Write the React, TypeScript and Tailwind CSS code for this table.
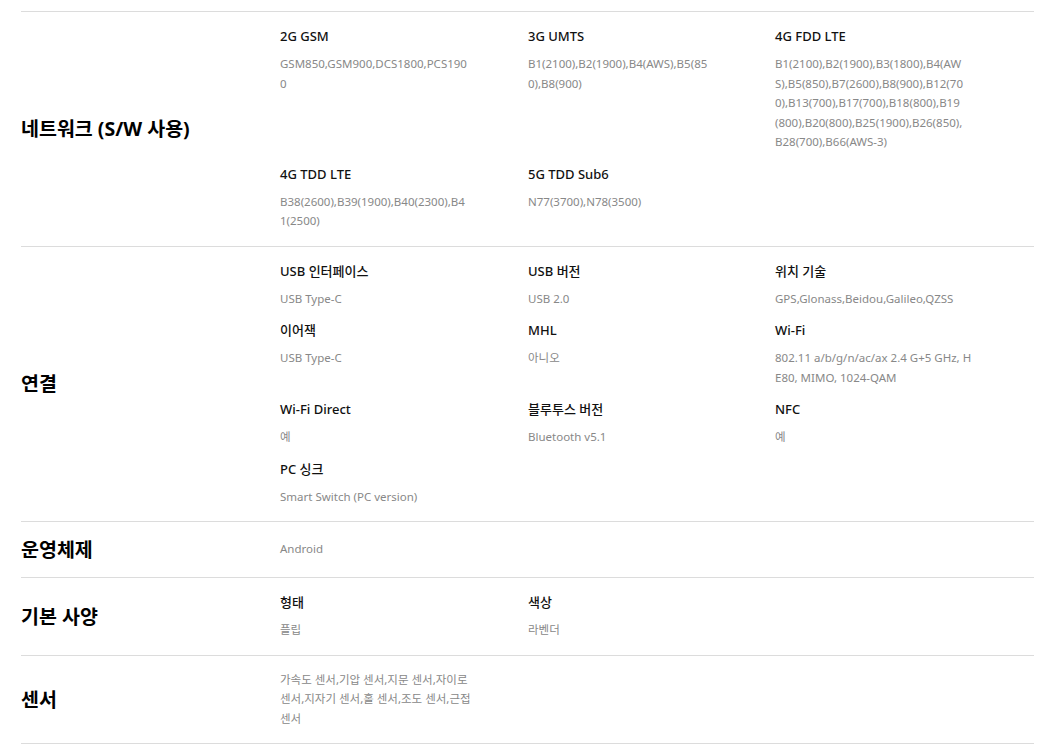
import React from "react";

type Spec = { title?: string; value: string };

type Section = {
  label: string;
  items: Spec[];
};

const sections: Section[] = [
  {
    label: "네트워크 (S/W 사용)",
    items: [
      { title: "2G GSM", value: "GSM850,GSM900,DCS1800,PCS190\n0" },
      { title: "3G UMTS", value: "B1(2100),B2(1900),B4(AWS),B5(85\n0),B8(900)" },
      {
        title: "4G FDD LTE",
        value:
          "B1(2100),B2(1900),B3(1800),B4(AW\nS),B5(850),B7(2600),B8(900),B12(70\n0),B13(700),B17(700),B18(800),B19\n(800),B20(800),B25(1900),B26(850),\nB28(700),B66(AWS-3)",
      },
      { title: "4G TDD LTE", value: "B38(2600),B39(1900),B40(2300),B4\n1(2500)" },
      { title: "5G TDD Sub6", value: "N77(3700),N78(3500)" },
    ],
  },
  {
    label: "연결",
    items: [
      { title: "USB 인터페이스", value: "USB Type-C" },
      { title: "USB 버전", value: "USB 2.0" },
      { title: "위치 기술", value: "GPS,Glonass,Beidou,Galileo,QZSS" },
      { title: "이어잭", value: "USB Type-C" },
      { title: "MHL", value: "아니오" },
      { title: "Wi-Fi", value: "802.11 a/b/g/n/ac/ax 2.4 G+5 GHz, H\nE80, MIMO, 1024-QAM" },
      { title: "Wi-Fi Direct", value: "예" },
      { title: "블루투스 버전", value: "Bluetooth v5.1" },
      { title: "NFC", value: "예" },
      { title: "PC 싱크", value: "Smart Switch (PC version)" },
    ],
  },
  {
    label: "운영체제",
    items: [{ value: "Android" }],
  },
  {
    label: "기본 사양",
    items: [
      { title: "형태", value: "플립" },
      { title: "색상", value: "라벤더" },
    ],
  },
  {
    label: "센서",
    items: [
      {
        value: "가속도 센서,기압 센서,지문 센서,자이로\n센서,지자기 센서,홀 센서,조도 센서,근접\n센서",
      },
    ],
  },
];

function SpecItem({ spec }: { spec: Spec }) {
  return (
    <div>
      {spec.title && (
        <div className="text-[13px] leading-5 font-medium text-[#111] mb-2">{spec.title}</div>
      )}
      <div className="text-[11.5px] leading-[19.5px] text-[#888] whitespace-pre-line">{spec.value}</div>
    </div>
  );
}

export default function App() {
  return (
    <div className="min-h-screen bg-white pl-[21px] pr-[6px] pt-[11px] font-['Noto_Sans','Noto_Sans_CJK_KR',sans-serif]">
      <div className="border-b border-[#dcdcdc]">
        {sections.map((section) => (
          <div key={section.label} className="flex items-center border-t border-[#dcdcdc]">
            <div className="w-[259px] shrink-0 py-[15px] text-[19.5px] leading-[25px] font-bold text-black">
              {section.label}
            </div>
            <div className="flex-1 pt-[14px] pb-[15px] grid grid-cols-[248px_247px_1fr] gap-y-3">
              {section.items.map((spec, i) => (
                <SpecItem key={i} spec={spec} />
              ))}
            </div>
          </div>
        ))}
      </div>
    </div>
  );
}
